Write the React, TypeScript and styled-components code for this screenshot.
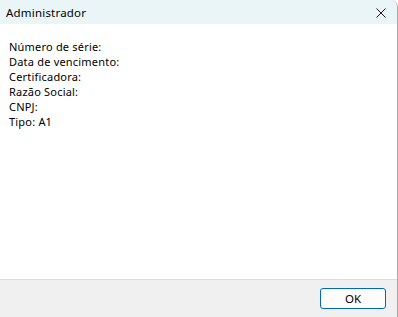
import React from "react";
import styled, { createGlobalStyle } from "styled-components";

const GlobalStyle = createGlobalStyle`
    html, body {
        margin: 0;
        padding: 0;
        background: #ffffff;
    }
    body {
        font-family: "Noto Sans", "Liberation Sans", sans-serif;
        font-size: 11px;
        letter-spacing: 0.2px;
        color: #000;
    }
`;

const fields = [
    "Número de série:",
    "Data de vencimento:",
    "Certificadora:",
    "Razão Social:",
    "CNPJ:",
    "Tipo: A1",
];

const App = () => {
    return (
        <>
            <GlobalStyle />
            <Window>
                <TitleBar>
                    <Title>Administrador</Title>
                    <CloseButton>
                        <svg width="10" height="10" viewBox="0 0 10 10">
                            <path
                                d="M0.5 0.5 L9.5 9.5 M9.5 0.5 L0.5 9.5"
                                stroke="#1a1a1a"
                                strokeWidth="1"
                            />
                        </svg>
                    </CloseButton>
                </TitleBar>
                <Content>
                    {fields.map((item, index) => (
                        <Line key={index}>{item}</Line>
                    ))}
                </Content>
                <Footer>
                    <OkButton>OK</OkButton>
                </Footer>
            </Window>
        </>
    );
};

export default App;

const Window = styled.div`
    width: 397px;
    height: 317px;
    display: flex;
    flex-direction: column;
    border-right: 1px solid #a8a8a8;
    border-top-right-radius: 7px;
    overflow: hidden;
    background: #fff;
`;

const TitleBar = styled.div`
    height: 24px;
    flex-shrink: 0;
    display: flex;
    align-items: center;
    justify-content: space-between;
    background-color: #eaf5f8;
    padding: 0 11px 0 6px;
`;

const Title = styled.span`
    font-size: 11.5px;
    line-height: 16px;
    padding-top: 1px;
`;

const CloseButton = styled.div`
    display: flex;
    align-items: center;
    width: 10px;
    height: 10px;
    margin-top: 1px;
`;

const Content = styled.div`
    flex: 1;
    padding: 15px 9px 0;
`;

const Line = styled.div`
    font-size: 11px;
    line-height: 15px;
    white-space: nowrap;
`;

const Footer = styled.div`
    height: 38px;
    flex-shrink: 0;
    display: flex;
    align-items: center;
    justify-content: flex-end;
    padding-right: 11px;
    background-color: #f0f0f0;
    border-top: 1px solid #dcdcdc;
    box-sizing: border-box;
`;

const OkButton = styled.button`
    width: 66px;
    height: 21px;
    box-sizing: border-box;
    border: 1px solid #0067c0;
    border-radius: 3px;
    background: #fdfdfd;
    font-family: "Noto Sans", "Liberation Sans", sans-serif;
    font-size: 11.5px;
    color: #000;
    padding: 0;
    margin-bottom: 1px;
`;
